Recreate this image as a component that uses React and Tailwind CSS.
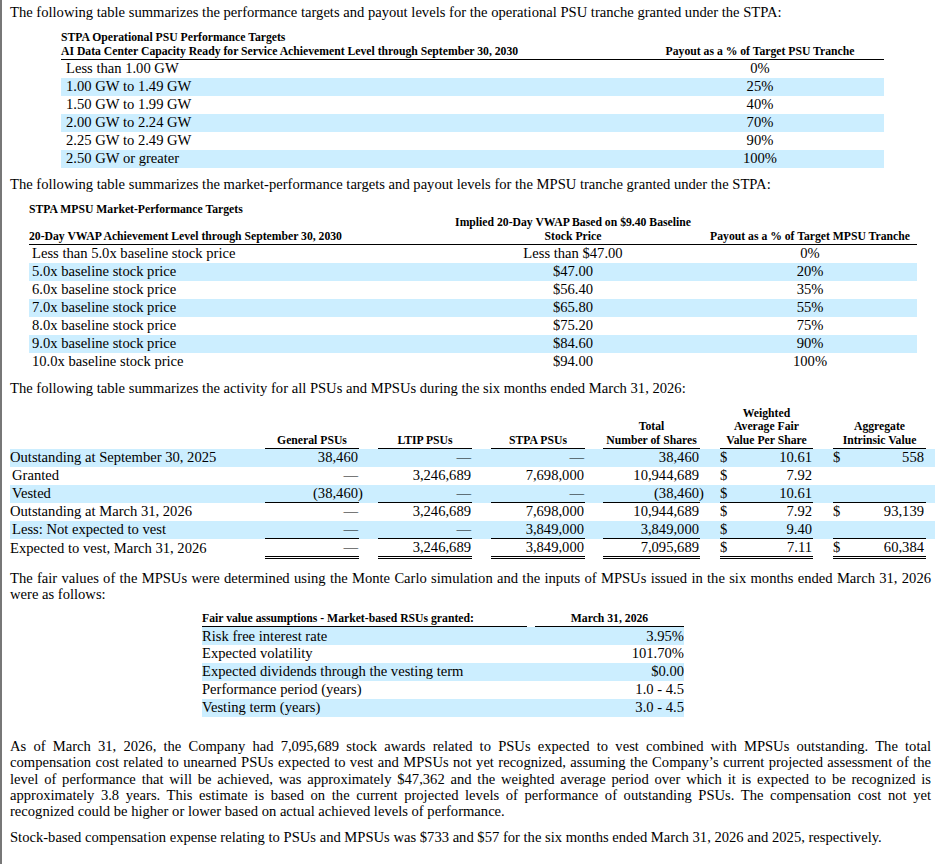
import React from 'react';

const blue = 'bg-[#cceeff]';

const psuTargets = [
  ['Less than 1.00 GW', '0%'],
  ['1.00 GW to 1.49 GW', '25%'],
  ['1.50 GW to 1.99 GW', '40%'],
  ['2.00 GW to 2.24 GW', '70%'],
  ['2.25 GW to 2.49 GW', '90%'],
  ['2.50 GW or greater', '100%'],
];

const mpsuTargets = [
  ['Less than 5.0x baseline stock price', 'Less than $47.00', '0%'],
  ['5.0x baseline stock price', '$47.00', '20%'],
  ['6.0x baseline stock price', '$56.40', '35%'],
  ['7.0x baseline stock price', '$65.80', '55%'],
  ['8.0x baseline stock price', '$75.20', '75%'],
  ['9.0x baseline stock price', '$84.60', '90%'],
  ['10.0x baseline stock price', '$94.00', '100%'],
];

// label, general, ltip, stpa, total, fair value, intrinsic, indent, line above
const activity = [
  ['Outstanding at September 30, 2025', '38,460', '—', '—', '38,460', '10.61', '558', false, false],
  ['Granted', '—', '3,246,689', '7,698,000', '10,944,689', '7.92', '', true, false],
  ['Vested', '(38,460)', '—', '—', '(38,460)', '10.61', '', true, false],
  ['Outstanding at March 31, 2026', '—', '3,246,689', '7,698,000', '10,944,689', '7.92', '93,139', false, true],
  ['Less: Not expected to vest', '—', '—', '3,849,000', '3,849,000', '9.40', '', true, false],
  ['Expected to vest, March 31, 2026', '—', '3,246,689', '3,849,000', '7,095,689', '7.11', '60,384', false, true],
];

const assumptions = [
  ['Risk free interest rate', '3.95%'],
  ['Expected volatility', '101.70%'],
  ['Expected dividends through the vesting term', '$0.00'],
  ['Performance period (years)', '1.0 - 4.5'],
  ['Vesting term (years)', '3.0 - 4.5'],
];

const hd = 'p-0 font-bold text-[11.7px] leading-[13.5px] align-bottom';

// numbers in parentheses let the closing paren hang past the column edge
const Num = ({ v }) => {
  if (v.startsWith('(')) {
    return (
      <span>
        {v.slice(0, -1)}
        <span className="inline-block w-0">)</span>
      </span>
    );
  }
  return <span>{v}</span>;
};

const App = () => {
  return (
    <div className="w-[941px] h-[864px] overflow-hidden bg-white border-l-2 border-[#777] pl-[8px] pr-[10px] text-black text-[14.6px] leading-[17px] font-['Liberation_Serif','Times_New_Roman',serif]">
      <p className="pt-[4px]">
        The following table summarizes the performance targets and payout levels for the operational PSU tranche granted under the STPA:
      </p>

      <table className="ml-[51px] mt-[10px] w-[823px] table-fixed border-collapse">
        <colgroup>
          <col className="w-[575px]" />
          <col className="w-[248px]" />
        </colgroup>
        <thead>
          <tr>
            <th className={`${hd} text-left`}>STPA Operational PSU Performance Targets</th>
            <th className={hd}></th>
          </tr>
          <tr>
            <th className={`${hd} text-left border-b border-black pb-[1px]`}>
              AI Data Center Capacity Ready for Service Achievement Level through September 30, 2030
            </th>
            <th className={`${hd} text-center border-b border-black pb-[1px]`}>Payout as a % of Target PSU Tranche</th>
          </tr>
        </thead>
        <tbody>
          {psuTargets.map((r, i) => (
            <tr key={r[0]} className={`h-[18px] ${i % 2 ? blue : ''}`}>
              <td className="p-0 pl-[5px]">{r[0]}</td>
              <td className="p-0 text-center">{r[1]}</td>
            </tr>
          ))}
        </tbody>
      </table>

      <p className="mt-[8px]">
        The following table summarizes the market-performance targets and payout levels for the MPSU tranche granted under the STPA:
      </p>

      <table className="ml-[19px] mt-[10px] w-[888px] table-fixed border-collapse">
        <colgroup>
          <col className="w-[414px]" />
          <col className="w-[260px]" />
          <col className="w-[214px]" />
        </colgroup>
        <thead>
          <tr>
            <th className={`${hd} text-left`} colSpan={3}>STPA MPSU Market-Performance Targets</th>
          </tr>
          <tr>
            <th className={`${hd} text-left border-b border-black pb-[1px]`}>
              20-Day VWAP Achievement Level through September 30, 2030
            </th>
            <th className={`${hd} text-center border-b border-black pb-[1px]`}>
              Implied 20-Day VWAP Based on $9.40 Baseline
              <br />
              Stock Price
            </th>
            <th className={`${hd} text-center border-b border-black pb-[1px]`}>Payout as a % of Target MPSU Tranche</th>
          </tr>
        </thead>
        <tbody>
          {mpsuTargets.map((r, i) => (
            <tr key={r[0]} className={`h-[18px] ${i % 2 ? blue : ''}`}>
              <td className="p-0 pl-[3px]">{r[0]}</td>
              <td className="p-0 text-center">{r[1]}</td>
              <td className="p-0 text-center">{r[2]}</td>
            </tr>
          ))}
        </tbody>
      </table>

      <p className="mt-[9px]">
        The following table summarizes the activity for all PSUs and MPSUs during the six months ended March 31, 2026:
      </p>

      <table className="mt-[10px] w-[925px] table-fixed border-collapse">
        <colgroup>
          <col className="w-[255px]" />
          <col className="w-[94px]" />
          <col className="w-[19px]" />
          <col className="w-[94px]" />
          <col className="w-[19px]" />
          <col className="w-[94px]" />
          <col className="w-[18px]" />
          <col className="w-[97px]" />
          <col className="w-[20px]" />
          <col className="w-[93px]" />
          <col className="w-[20px]" />
          <col className="w-[93px]" />
          <col className="w-[9px]" />
        </colgroup>
        <thead>
          <tr>
            <th className={hd}></th>
            <th className={`${hd} text-center border-b border-black pb-[1px]`}>General PSUs</th>
            <th className={hd}></th>
            <th className={`${hd} text-center border-b border-black pb-[1px]`}>LTIP PSUs</th>
            <th className={hd}></th>
            <th className={`${hd} text-center border-b border-black pb-[1px]`}>STPA PSUs</th>
            <th className={hd}></th>
            <th className={`${hd} text-center border-b border-black pb-[1px]`}>
              Total
              <br />
              Number of Shares
            </th>
            <th className={hd}></th>
            <th className={`${hd} text-center border-b border-black pb-[1px]`}>
              Weighted
              <br />
              Average Fair
              <br />
              Value Per Share
            </th>
            <th className={hd}></th>
            <th className={`${hd} text-center border-b border-black pb-[1px]`}>
              Aggregate
              <br />
              Intrinsic Value
            </th>
            <th className={hd}></th>
          </tr>
        </thead>
        <tbody>
          {activity.map((r, i) => {
            const line = `${r[8] ? 'border-t border-black' : ''} ${i === activity.length - 1 ? 'border-b-[3px] border-double border-black' : ''}`;
            return (
              <tr key={r[0]} className={`h-[18px] ${i % 2 ? '' : blue}`}>
                <td className={`p-0 whitespace-nowrap ${r[7] ? 'pl-[2px]' : ''}`}>{r[0]}</td>
                <td className={`p-0 pr-[1px] text-right ${line}`}><Num v={r[1]} /></td>
                <td className="p-0"></td>
                <td className={`p-0 pr-[1px] text-right ${line}`}><Num v={r[2]} /></td>
                <td className="p-0"></td>
                <td className={`p-0 pr-[1px] text-right ${line}`}><Num v={r[3]} /></td>
                <td className="p-0"></td>
                <td className={`p-0 pr-[1px] text-right ${line}`}><Num v={r[4]} /></td>
                <td className="p-0"></td>
                <td className={`p-0 pr-[1px] ${line}`}>
                  <div className="flex justify-between">
                    <span>$</span>
                    <span>{r[5]}</span>
                  </div>
                </td>
                <td className="p-0"></td>
                <td className={`p-0 pr-[2px] ${line}`}>
                  {r[6] && (
                    <div className="flex justify-between">
                      <span>$</span>
                      <span>{r[6]}</span>
                    </div>
                  )}
                </td>
                <td className="p-0"></td>
              </tr>
            );
          })}
        </tbody>
      </table>

      <p className="mt-[11px] leading-[16.4px] text-justify">
        The fair values of the MPSUs were determined using the Monte Carlo simulation and the inputs of MPSUs issued in the six months ended March 31, 2026 were as follows:
      </p>

      <table className="ml-[192px] mt-[9px] w-[482px] table-fixed border-collapse">
        <colgroup>
          <col className="w-[325px]" />
          <col className="w-[8px]" />
          <col className="w-[149px]" />
        </colgroup>
        <thead>
          <tr>
            <th className={`${hd} text-left border-b border-black pb-[1px]`}>Fair value assumptions - Market-based RSUs granted:</th>
            <th className={hd}></th>
            <th className={`${hd} text-center border-b border-black pb-[1px]`}>March 31, 2026</th>
          </tr>
        </thead>
        <tbody>
          {assumptions.map((r, i) => (
            <tr key={r[0]} className={`h-[18px] ${i % 2 ? '' : blue}`}>
              <td className="p-0">{r[0]}</td>
              <td className="p-0"></td>
              <td className="p-0 text-right">{r[1]}</td>
            </tr>
          ))}
        </tbody>
      </table>

      <p className="mt-[21px] leading-[16.4px] text-justify">
        As of March 31, 2026, the Company had 7,095,689 stock awards related to PSUs expected to vest combined with MPSUs outstanding. The total compensation cost related to unearned PSUs expected to vest and MPSUs not yet recognized, assuming the Company’s current projected assessment of the level of performance that will be achieved, was approximately $47,362 and the weighted average period over which it is expected to be recognized is approximately 3.8 years. This estimate is based on the current projected levels of performance of outstanding PSUs. The compensation cost not yet recognized could be higher or lower based on actual achieved levels of performance.
      </p>

      <p className="mt-[9px] leading-[16.4px]">
        Stock-based compensation expense relating to PSUs and MPSUs was $733 and $57 for the six months ended March 31, 2026 and 2025, respectively.
      </p>
    </div>
  );
};

export default App;
